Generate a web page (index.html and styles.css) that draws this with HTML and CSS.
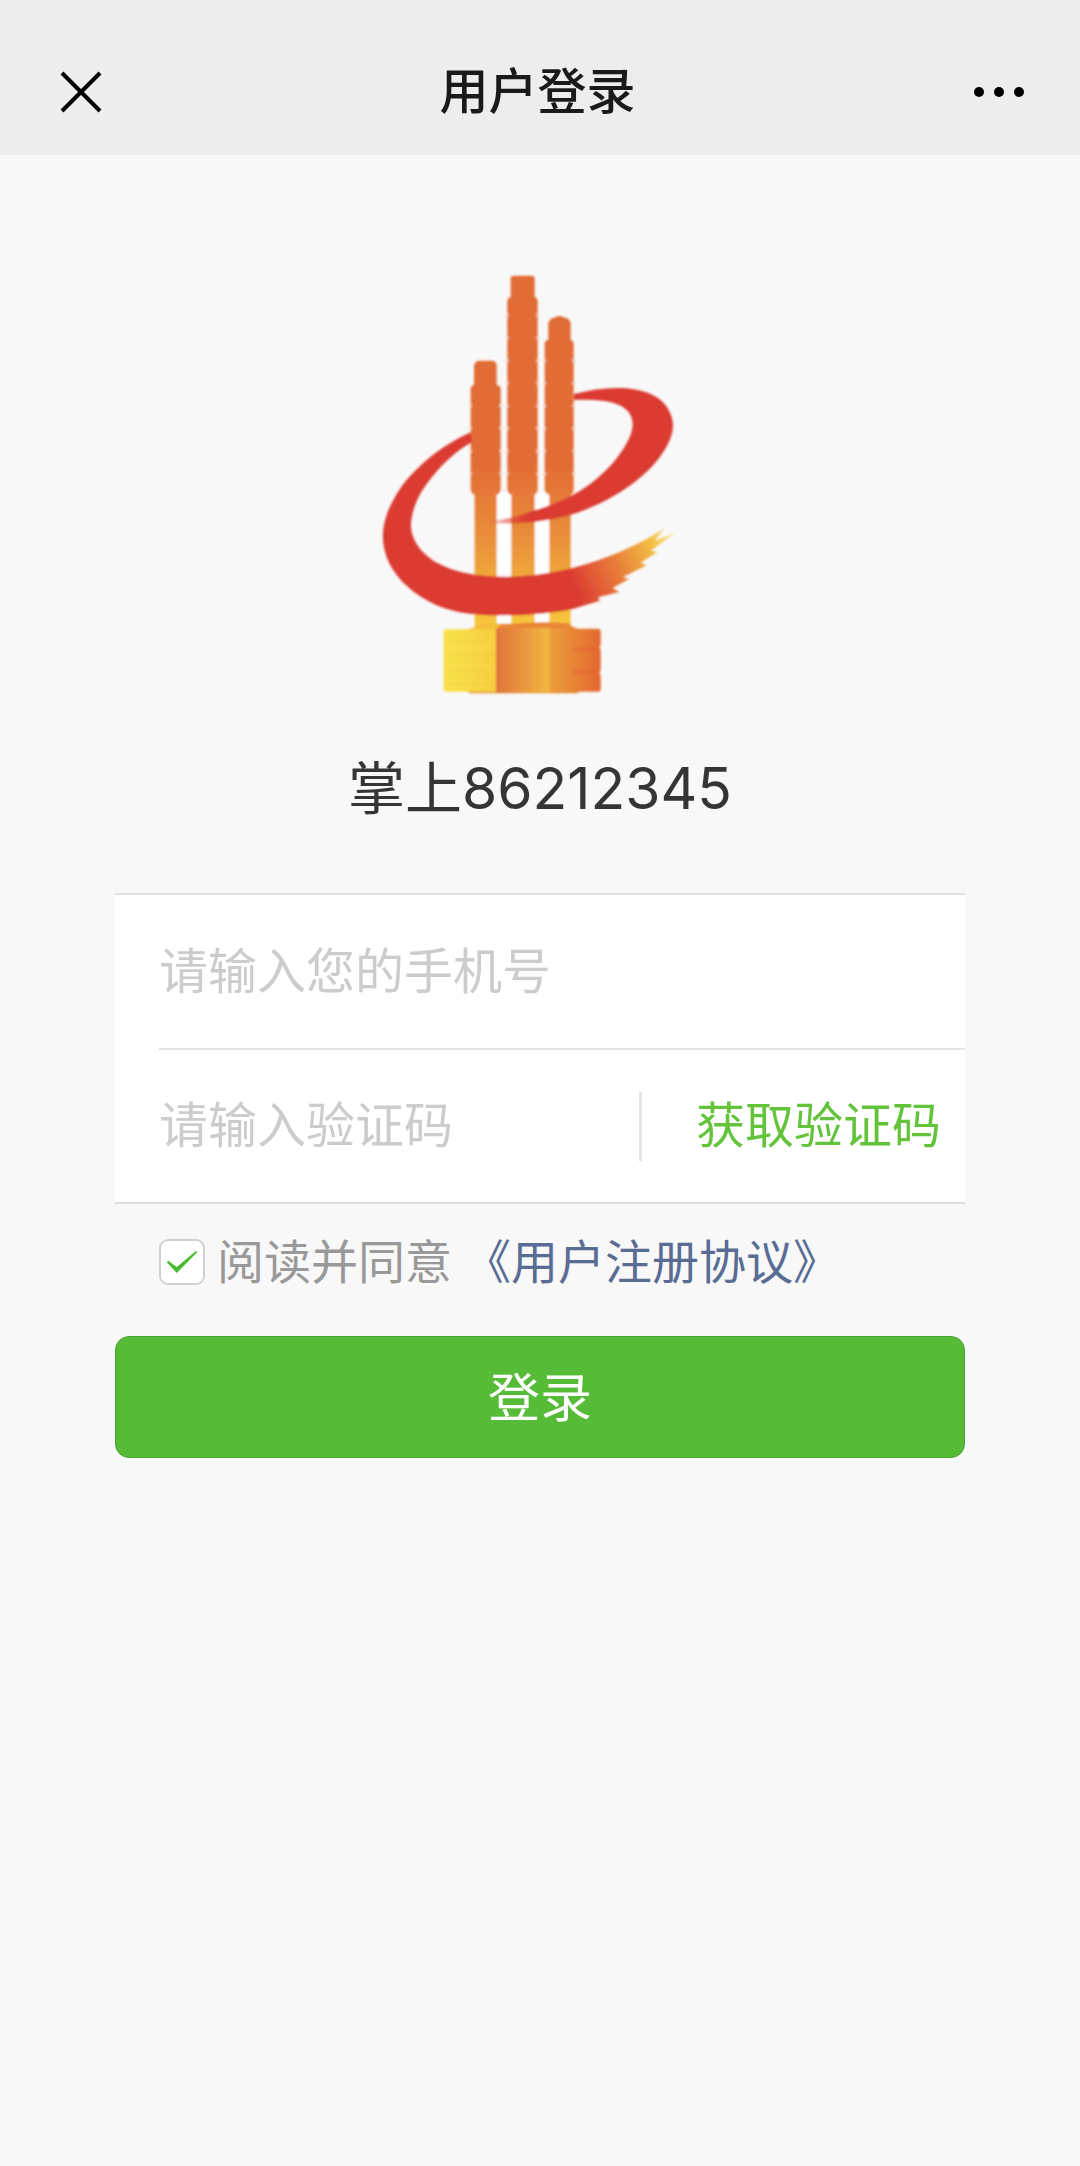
FILE: index.html
```html
<!DOCTYPE html>
<html lang="zh-CN">
<head>
    <meta charset="UTF-8">
    <meta name="viewport" content="width=device-width, initial-scale=1.0">
    <title>用户登录</title>
    <link rel="stylesheet" href="styles.css">
</head>
<body>
    <header class="navbar">
        <button type="button" class="nav-btn close-btn" aria-label="关闭">
            <svg width="42" height="42" viewBox="0 0 42 42" fill="none" stroke="#000" stroke-width="4">
                <path d="M2 2L40 40M40 2L2 40"/>
            </svg>
        </button>
        <h1>用户登录</h1>
        <button type="button" class="nav-btn" aria-label="更多">
            <svg width="52" height="12" viewBox="0 0 52 12">
                <circle cx="6" cy="6" r="5"/>
                <circle cx="26" cy="6" r="5"/>
                <circle cx="46" cy="6" r="5"/>
            </svg>
        </button>
    </header>

    <main class="container">
        <svg class="logo" viewBox="-120 0 1260 1350" aria-hidden="true">
            <defs>
                <filter id="soft" x="-5%" y="-5%" width="110%" height="110%">
                    <feGaussianBlur stdDeviation="3"/>
                </filter>
                <linearGradient id="pillar" gradientUnits="userSpaceOnUse" x1="0" y1="620" x2="0" y2="1090">
                    <stop offset="0" stop-color="#e26c35"/>
                    <stop offset="0.5" stop-color="#ea933b"/>
                    <stop offset="1" stop-color="#f6c53a"/>
                </linearGradient>
                <linearGradient id="brush" gradientUnits="userSpaceOnUse" x1="600" y1="960" x2="910" y2="830">
                    <stop offset="0" stop-color="#dc3a31"/>
                    <stop offset="0.45" stop-color="#e8803a"/>
                    <stop offset="0.8" stop-color="#f3bf42"/>
                    <stop offset="1" stop-color="#f8e08a"/>
                </linearGradient>
                <linearGradient id="arc" gradientUnits="userSpaceOnUse" x1="330" y1="0" x2="480" y2="0">
                    <stop offset="0" stop-color="#dc3a31" stop-opacity="0"/>
                    <stop offset="1" stop-color="#dc3a31"/>
                </linearGradient>
                <linearGradient id="baseLeft">
                    <stop offset="0" stop-color="#f9e24a"/>
                    <stop offset="1" stop-color="#f5cf40"/>
                </linearGradient>
                <linearGradient id="baseMid">
                    <stop offset="0" stop-color="#e0733a"/>
                    <stop offset="1" stop-color="#f2b940"/>
                </linearGradient>
                <linearGradient id="baseRight">
                    <stop offset="0" stop-color="#ec9f3b"/>
                    <stop offset="1" stop-color="#e4672f"/>
                </linearGradient>
            </defs>

            <g filter="url(#soft)">
                <!-- pillars -->
                <path fill="#fff" d="M380 700H424V1085H380zM494 700H538V1085H494z"/>
                <g fill="url(#pillar)">
                    <path d="M314 1100V705Q302 700 302 685V385Q304 375 312 375V318Q314 302 330 302H364Q380 302 380 318V375Q392 377 392 387V685Q392 700 380 705V1100z"/>
                    <path d="M424 1100V705Q412 700 412 685V122Q414 112 422 112V55Q422 47 430 47H486Q494 47 494 55V112Q503 114 503 124V685Q503 700 494 705V1100z"/>
                    <path d="M538 1100V705Q524 700 524 685V250Q526 240 535 240V190Q538 175 556 172Q568 164 580 172Q600 175 602 190V240Q611 242 611 252V685Q611 700 602 705V1100z"/>
                </g>
                <g stroke="#f6cdb4" stroke-width="9" stroke-dasharray="7 61" fill="none">
                    <path d="M302 433V690M392 433V690M412 162V690M503 162V690M524 298V690M611 298V690"/>
                </g>

                <!-- ribbon -->
                <path fill="url(#arc)" d="M612 402Q680 384 740 384C820 384 872 408 894 446C918 488 910 520 892 556C866 606 812 660 750 697C690 734 630 760 560 775C500 788 400 798 340 784Q420 780 480 755C540 738 600 712 640 686C700 646 740 600 764 560C790 518 796 484 776 456C750 424 690 416 612 420z"/>
                <path fill="url(#brush)" d="M302 517C220 554 140 616 90 686C50 746 34 800 40 850C50 930 110 990 180 1026C240 1058 320 1068 400 1066C480 1066 560 1058 610 1046L690 1022L684 1012L748 996L728 984L778 956L758 952L830 916L812 908L862 876L842 872L916 818L854 842L884 805C820 846 740 886 640 915C560 938 480 950 400 950C320 950 250 936 204 910C150 880 116 830 124 780C132 730 152 696 176 664C212 616 256 574 306 546z"/>

                <!-- base -->
                <path fill="#e98537" d="M282 1110Q320 1104 332 1092H420Q510 1082 596 1090Q608 1106 640 1110z"/>
                <path fill="#f5bd3b" d="M282 1110Q320 1104 332 1092H392L378 1112z"/>
                <path fill="#e88b35" d="M285 1290H625V1300H300z"/>
                <path fill="url(#baseLeft)" d="M228 1108H380V1295H228Q221 1295 221 1288V1114Q221 1108 228 1108z"/>
                <path fill="url(#baseMid)" d="M378 1104H540V1298H378z"/>
                <path fill="url(#baseRight)" d="M538 1106H686Q692 1108 692 1114V1155L688 1162L692 1170V1230L688 1238L692 1246V1288Q692 1295 684 1295H538z"/>
                <path stroke="#e0592d" stroke-width="12" stroke-opacity="0.4" d="M608 1168H680M608 1236H680"/>
                <path stroke="#edb03c" stroke-width="5" stroke-opacity="0.2" d="M225 1146H370M225 1184H370M225 1230H370M225 1270H370"/>
                <circle cx="1126" cy="804" r="5" fill="#efefef"/>
            </g>
        </svg>
        <h2>掌上86212345</h2>

        <form id="loginForm">
            <div class="cells">
                <div class="cell">
                    <input type="tel" name="phone" placeholder="请输入您的手机号" aria-label="手机号">
                </div>
                <div class="cell">
                    <input type="text" name="code" placeholder="请输入验证码" aria-label="验证码">
                    <button type="button" class="code-btn">获取验证码</button>
                </div>
            </div>
            <div class="agree">
                <input type="checkbox" id="agree" name="agree" checked>
                <label for="agree">阅读并同意</label>
                <a href="#">《用户注册协议》</a>
            </div>
            <button type="submit" class="login-btn">登录</button>
        </form>
    </main>
</body>
</html>
```
FILE: styles.css
```css
* {
    box-sizing: border-box;
}

body {
    margin: 0;
    min-height: 100vh;
    background: #f8f8f8;
    font-family: Inter, "Noto Sans CJK SC", sans-serif;
    color: #353535;
}

input, button {
    font-family: inherit;
}

button {
    border: none;
    background: none;
    padding: 0;
    cursor: pointer;
}

/* Top bar */
.navbar {
    display: flex;
    justify-content: space-between;
    align-items: center;
    height: 155px;
    padding: 28px 55px 0 60px;
    background: #ededed;
}

.navbar h1 {
    margin: 0;
    font-size: 49px;
    line-height: 60px;
    font-weight: 500;
    color: #1a1a1a;
}

.nav-btn {
    display: flex;
    width: 52px;
}

.close-btn {
    width: 42px;
}

.container {
    padding: 105px 115px 0;
}

.logo {
    display: block;
    width: 420px;
    height: 450px;
    margin: 0 auto;
}

h2 {
    margin: 40px 0 65px;
    font-size: 57px;
    line-height: 78px;
    font-weight: 400;
    text-align: center;
}

/* Form */
.cells {
    background: #fff;
    border-top: 2px solid #dfdfdf;
    border-bottom: 2px solid #dfdfdf;
}

.cell {
    display: flex;
    align-items: center;
    height: 153px;
    margin-left: 44px;
}

.cell + .cell {
    height: 154px;
    border-top: 2px solid #e5e5e5;
}

.cell input {
    flex: 1;
    min-width: 0;
    padding: 0;
    border: none;
    outline: none;
    background: none;
    font-size: 49px;
    line-height: 68px;
    color: #353535;
}

.cell input::placeholder {
    color: #ccc;
    opacity: 1;
}

.code-btn {
    height: 69px;
    padding: 0 24px 0 54px;
    border-left: 3px solid #e5e5e5;
    font-size: 49px;
    line-height: 68px;
    color: #63c33a;
}

.agree {
    display: flex;
    align-items: center;
    height: 132px;
    padding: 0 0 16px 44px;
    font-size: 47px;
    line-height: 64px;
    color: #999;
}

.agree input {
    appearance: none;
    display: grid;
    place-items: center;
    width: 46px;
    height: 46px;
    margin: 0 12px 0 0;
    border: 2px solid #d1d1d1;
    border-radius: 9px;
    background: #fff;
}

.agree input:checked::before {
    content: "";
    width: 31px;
    height: 22px;
    background: #4dbb31;
    clip-path: polygon(0 50%, 7% 46%, 33% 73%, 95% 0, 100% 5%, 33% 100%);
}

.agree a {
    margin-left: 12px;
    color: #586c94;
    text-decoration: none;
}

.login-btn {
    display: block;
    width: 100%;
    height: 122px;
    padding-bottom: 6px;
    border: 1px solid #4ba331;
    border-radius: 14px;
    background: #56bb37;
    font-size: 52px;
    color: #fff;
}
```
